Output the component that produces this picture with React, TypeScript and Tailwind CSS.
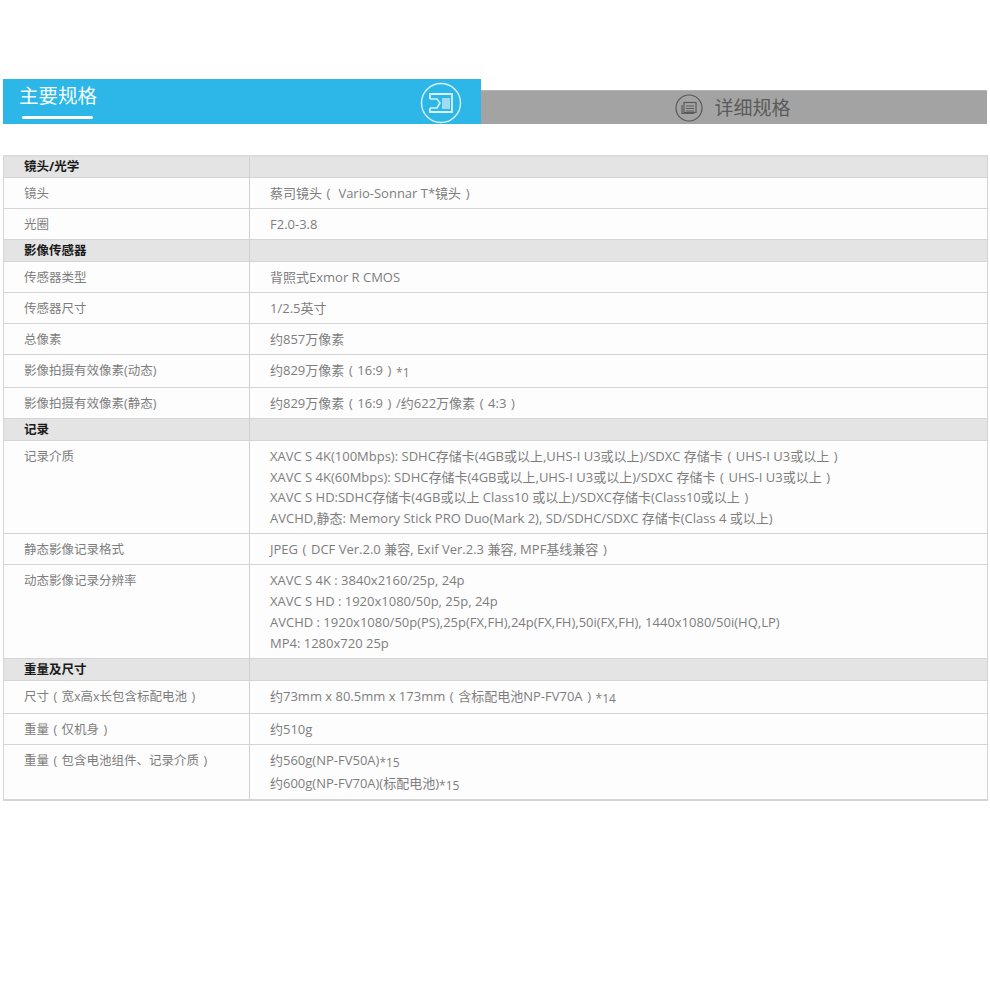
import { Fragment } from 'react';

const FONT = "font-['Open_Sans','Noto_Sans_CJK_SC',sans-serif]";

type Row =
  | { kind: 'head'; label: string; h: string }
  | { kind: 'row'; label: string; lines: [string, string?][]; h: string; lead?: string; pad?: string };

const rows: Row[] = [
  { kind: 'head', label: '镜头/光学', h: 'h-[22px]' },
  { kind: 'row', label: '镜头', lines: [['蔡司镜头（ Vario-Sonnar T*镜头）']], h: 'h-[31px]' },
  { kind: 'row', label: '光圈', lines: [['F2.0-3.8']], h: 'h-[31px]' },
  { kind: 'head', label: '影像传感器', h: 'h-[22px]' },
  { kind: 'row', label: '传感器类型', lines: [['背照式Exmor R CMOS']], h: 'h-[31px]' },
  { kind: 'row', label: '传感器尺寸', lines: [['1/2.5英寸']], h: 'h-[31px]' },
  { kind: 'row', label: '总像素', lines: [['约857万像素']], h: 'h-[31px]' },
  { kind: 'row', label: '影像拍摄有效像素(动态)', lines: [['约829万像素（16:9）', '*1']], h: 'h-[33px]' },
  { kind: 'row', label: '影像拍摄有效像素(静态)', lines: [['约829万像素（16:9）/约622万像素（4:3）']], h: 'h-[31px]' },
  { kind: 'head', label: '记录', h: 'h-[22px]' },
  {
    kind: 'row',
    label: '记录介质',
    lines: [
      ['XAVC S 4K(100Mbps): SDHC存储卡(4GB或以上,UHS-I U3或以上)/SDXC 存储卡（UHS-I U3或以上）'],
      ['XAVC S 4K(60Mbps): SDHC存储卡(4GB或以上,UHS-I U3或以上)/SDXC 存储卡（UHS-I U3或以上）'],
      ['XAVC S HD:SDHC存储卡(4GB或以上 Class10 或以上)/SDXC存储卡(Class10或以上）'],
      ['AVCHD,静态: Memory Stick PRO Duo(Mark 2), SD/SDHC/SDXC 存储卡(Class 4 或以上)'],
    ],
    h: 'h-[93px]',
    lead: 'leading-[20.7px]',
  },
  { kind: 'row', label: '静态影像记录格式', lines: [['JPEG（DCF Ver.2.0 兼容, Exif Ver.2.3 兼容, MPF基线兼容）']], h: 'h-[31px]' },
  {
    kind: 'row',
    label: '动态影像记录分辨率',
    lines: [
      ['XAVC S 4K : 3840x2160/25p, 24p'],
      ['XAVC S HD : 1920x1080/50p, 25p, 24p'],
      ['AVCHD : 1920x1080/50p(PS),25p(FX,FH),24p(FX,FH),50i(FX,FH), 1440x1080/50i(HQ,LP)'],
      ['MP4: 1280x720 25p'],
    ],
    h: 'h-[94px]',
  },
  { kind: 'head', label: '重量及尺寸', h: 'h-[22px]' },
  { kind: 'row', label: '尺寸（宽x高x长包含标配电池）', lines: [['约73mm x 80.5mm x 173mm（含标配电池NP-FV70A）', '*14']], h: 'h-[33px]' },
  { kind: 'row', label: '重量（仅机身）', lines: [['约510g']], h: 'h-[31px]' },
  {
    kind: 'row',
    label: '重量（包含电池组件、记录介质）',
    lines: [
      ['约560g(NP-FV50A)', '*15'],
      ['约600g(NP-FV70A)(标配电池)', '*15'],
    ],
    h: 'h-[54px]',
    lead: 'leading-[23px]',
    pad: 'pt-[4px]',
  },
];

// the reference font centres its full-width brackets in the cell, Noto doesn't
function Cjk({ text }: { text: string }) {
  return (
    <>
      {text.split(/([（）])/).map((part, i) =>
        part === '（' || part === '）' ? (
          <span key={i} className="inline-block w-[1em] text-center">
            {part === '（' ? '(' : ')'}
          </span>
        ) : (
          <Fragment key={i}>{part}</Fragment>
        ),
      )}
    </>
  );
}

function ActiveIcon() {
  return (
    <svg width="42" height="42" viewBox="0 0 42 42" fill="none" stroke="#d8f1fb">
      <circle cx="21" cy="21" r="19.5" strokeWidth="1.4" />
      <path d="M10 17v-5h22v18H10v-4" strokeWidth="1.8" />
      <path d="M10 17h7l3 4-3 5h-7" strokeWidth="1.6" />
      <rect x="22" y="16" width="8" height="11" fill="#9fdcf3" stroke="none" />
    </svg>
  );
}

function InactiveIcon() {
  return (
    <svg width="28" height="28" viewBox="0 0 28 28" fill="none" stroke="#5a5a5a">
      <circle cx="14" cy="14" r="13" strokeWidth="1.2" />
      <rect x="9" y="8.500" width="12" height="10" strokeWidth="1.2" />
      <path d="M7 11v8.500h12" strokeWidth="1.2" />
      <path d="M11 12h8M11 14.500h8M11 17h8" strokeWidth="1" />
    </svg>
  );
}

export default function App() {
  return (
    <div className={`${FONT} w-[990px] h-[1000px] bg-white pt-[79px]`}>
      {/* Tabs */}
      <div className="flex items-end pl-[3px] pr-[3px]">
        <div className="w-[478px] h-[45px] bg-[#2cb7e8] flex justify-between pl-[16px] pr-[19px]">
          <div className="flex flex-col w-[78px]">
            <span className="text-[19.5px] leading-[24px] mt-[5px] text-[#f4fbfe]">主要规格</span>
            <span className="h-[3px] w-[71px] ml-[3px] mt-[8px] bg-white rounded-sm" />
          </div>
          <div className="pt-[3px]">
            <ActiveIcon />
          </div>
        </div>
        <div className="flex-1 h-[34px] bg-[#a3a3a3] border-t border-[#b3b3b3] flex items-center justify-center gap-[11px] pr-[2px]">
          <InactiveIcon />
          <span className="text-[19px] leading-[24px] text-[#5a5a5a]">详细规格</span>
        </div>
      </div>

      {/* Spec table */}
      <div className="mt-[31px] mx-[3px] w-[985px] border border-[#d4d4d4] border-b-2 border-t-2 border-t-[#dcdcdc]">
        {rows.map((row, i) =>
          row.kind === 'head' ? (
            <div key={i} className={`flex ${i === 0 ? 'h-[21px]' : row.h} bg-[#e4e4e4] border-b border-[#d4d4d4]`}>
              <div className={`w-[246px] shrink-0 border-r border-[#d0d0d0] pl-[20px] text-[12.5px] ${i === 0 ? 'leading-[20px]' : 'leading-[21px]'} font-bold text-[#1a1a1a]`}>
                {row.label}
              </div>
            </div>
          ) : (
            <div key={i} className={`flex ${row.h} bg-[#fdfdfd] border-b border-[#d4d4d4] last:border-b-0`}>
              <div className="w-[246px] shrink-0 border-r border-[#d0d0d0] pl-[20px] pt-[5px] text-[12.5px] leading-[21px] text-[#7d7d7d]">
                <Cjk text={row.label} />
              </div>
              <div className={`pl-[20px] ${row.pad ?? 'pt-[5px]'} text-[13px] ${row.lead ?? 'leading-[21px]'} text-[#7d7d7d] whitespace-nowrap`}>
                {row.lines.map((line, j) => (
                  <div key={j}>
                    <Cjk text={line[0]} />
                    {line[1] && <span className="text-[12px] relative top-[2px]">{line[1]}</span>}
                  </div>
                ))}
              </div>
            </div>
          ),
        )}
      </div>
    </div>
  );
}
